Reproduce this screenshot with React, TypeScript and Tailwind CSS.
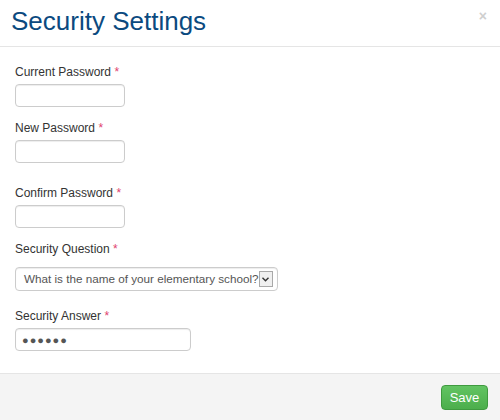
import type { ReactNode } from 'react';

/* Arial-width stack, as in the screenshot */
const FONT = "font-['Liberation_Sans',Arial,sans-serif]";

function Label({ children }: { children: ReactNode }) {
    return (
        <div className="h-[17px] text-[12px] leading-[17px] text-[#333]">
            {children} <span className="text-[#e0436f]">*</span>
        </div>
    );
}

function TextBox({ width, children }: { width: string; children?: ReactNode }) {
    return (
        <div
            className={`${width} h-[23px] rounded-[4px] border border-[#cccccc] bg-white shadow-[inset_0_1px_1px_rgba(0,0,0,0.075)] flex items-center px-[6px]`}
        >
            {children}
        </div>
    );
}

export default function App() {
    return (
        <div className={`${FONT} w-[500px] h-[420px] bg-white flex flex-col overflow-hidden`}>
            {/* header */}
            <div className="h-[47px] border-b border-[#e5e5e5] flex items-start justify-between pl-[11px] pr-[13px] pt-[6px]">
                <h1 className="text-[26px] leading-[30px] text-[#0b4a7f]">Security Settings</h1>
                <span className="mt-[1px] text-[14px] leading-[18px] font-bold text-[#cfcfcf]">×</span>
            </div>

            {/* body */}
            <div className="flex-1 flex flex-col px-[15px] pt-[17px]">
                <Label>Current Password</Label>
                <div className="mt-[3px]">
                    <TextBox width="w-[110px]" />
                </div>

                <div className="mt-[13px]">
                    <Label>New Password</Label>
                </div>
                <div className="mt-[3px]">
                    <TextBox width="w-[110px]" />
                </div>

                <div className="mt-[22px]">
                    <Label>Confirm Password</Label>
                </div>
                <div className="mt-[3px]">
                    <TextBox width="w-[110px]" />
                </div>

                <div className="mt-[13px]">
                    <Label>Security Question</Label>
                </div>
                <div className="mt-[9px]">
                    <div className="w-[263px] h-[24px] rounded-[4px] border border-[#cccccc] bg-white flex items-center pl-[8px] pr-[4px] shadow-[inset_0_1px_1px_rgba(0,0,0,0.075)]">
                        <span className="flex-1 text-[11.7px] leading-[16px] text-[#555] whitespace-nowrap">
                            What is the name of your elementary school?
                        </span>
                        <span className="w-[16px] h-[16px] border border-[#a9a9a9] bg-[#f0f0f0] flex items-center justify-center">
                            <svg width="7" height="5" viewBox="0 0 7 5">
                                <path d="M0.5 0.8 L3.5 3.8 L6.5 0.8" fill="none" stroke="#333" strokeWidth="1.4" />
                            </svg>
                        </span>
                    </div>
                </div>

                <div className="mt-[17px]">
                    <Label>Security Answer</Label>
                </div>
                <div className="mt-[3px]">
                    <TextBox width="w-[176px]">
                        <span className="text-[11px] leading-[12px] tracking-[1px] text-[#555]">●●●●●●</span>
                    </TextBox>
                </div>
            </div>

            {/* footer */}
            <div className="h-[47px] border-t border-[#e5e5e5] bg-[#f4f4f4] flex justify-end items-start pt-[11px] pr-[12px]">
                <button className="w-[47px] h-[25px] rounded-[4px] border border-[#3f9a3f] bg-gradient-to-b from-[#62c462] to-[#4cae4c] text-white text-[13px] leading-[23px]">
                    Save
                </button>
            </div>
        </div>
    );
}
